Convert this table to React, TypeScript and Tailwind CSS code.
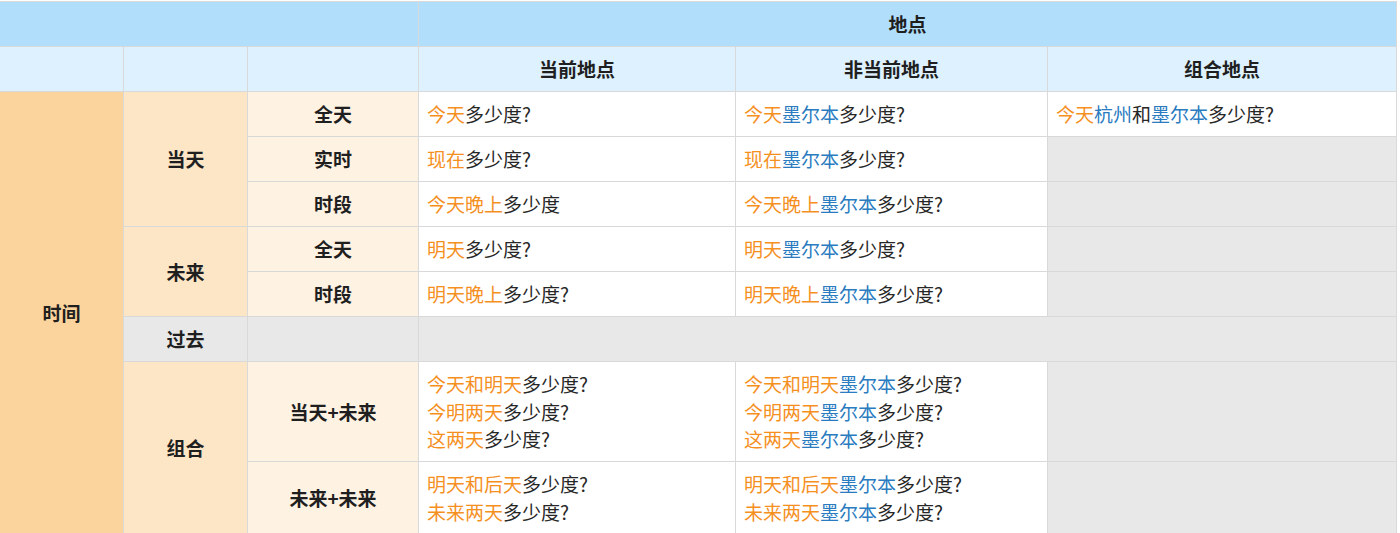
import React from "react";

const O = ({ children }: { children: React.ReactNode }) => (
  <span className="text-[#f5901f]">{children}</span>
);
const B = ({ children }: { children: React.ReactNode }) => (
  <span className="text-[#2a7bbf]">{children}</span>
);

const td = "border border-[#d9d9d9] px-[8px] py-[8.25px] leading-[27.5px] align-middle";
const lbl = `${td} text-center font-semibold text-[#1f1f1f]`;
const cell = `${td} bg-white text-[#262626] text-left`;
const gray = `${td} bg-[#e8e8e8]`;

export default function App() {
  return (
    <div className="w-[1400px] h-[533px] overflow-hidden bg-white pt-px">
      <table
        className="border-collapse table-fixed ml-[-1px] text-[19px]"
        style={{ fontFamily: '"Noto Sans CJK SC", "Noto Sans", sans-serif', width: 1398 }}
      >
        <colgroup>
          <col style={{ width: 124 }} />
          <col style={{ width: 124 }} />
          <col style={{ width: 171 }} />
          <col style={{ width: 317 }} />
          <col style={{ width: 312 }} />
          <col style={{ width: 349 }} />
        </colgroup>
        <tbody>
          <tr>
            <td colSpan={3} className={`${lbl} bg-[#b0defb]`}>&nbsp;</td>
            <td colSpan={3} className={`${lbl} bg-[#b0defb]`}>地点</td>
          </tr>
          <tr>
            <td className={`${lbl} bg-[#ddf1fe]`}>&nbsp;</td>
            <td className={`${lbl} bg-[#ddf1fe]`}>&nbsp;</td>
            <td className={`${lbl} bg-[#ddf1fe]`}>&nbsp;</td>
            <td className={`${lbl} bg-[#ddf1fe]`}>当前地点</td>
            <td className={`${lbl} bg-[#ddf1fe]`}>非当前地点</td>
            <td className={`${lbl} bg-[#ddf1fe]`}>组合地点</td>
          </tr>
          <tr>
            <td rowSpan={9} className={`${lbl} bg-[#fad49c]`}>时间</td>
            <td rowSpan={3} className={`${lbl} bg-[#fde6c6]`}>当天</td>
            <td className={`${lbl} bg-[#fef2e3]`}>全天</td>
            <td className={cell}><O>今天</O>多少度?</td>
            <td className={cell}><O>今天</O><B>墨尔本</B>多少度?</td>
            <td className={cell}><O>今天</O><B>杭州</B>和<B>墨尔本</B>多少度?</td>
          </tr>
          <tr>
            <td className={`${lbl} bg-[#fef2e3]`}>实时</td>
            <td className={cell}><O>现在</O>多少度?</td>
            <td className={cell}><O>现在</O><B>墨尔本</B>多少度?</td>
            <td className={gray}></td>
          </tr>
          <tr>
            <td className={`${lbl} bg-[#fef2e3]`}>时段</td>
            <td className={cell}><O>今天晚上</O>多少度</td>
            <td className={cell}><O>今天晚上</O><B>墨尔本</B>多少度?</td>
            <td className={gray}></td>
          </tr>
          <tr>
            <td rowSpan={2} className={`${lbl} bg-[#fde6c6]`}>未来</td>
            <td className={`${lbl} bg-[#fef2e3]`}>全天</td>
            <td className={cell}><O>明天</O>多少度?</td>
            <td className={cell}><O>明天</O><B>墨尔本</B>多少度?</td>
            <td className={gray}></td>
          </tr>
          <tr>
            <td className={`${lbl} bg-[#fef2e3]`}>时段</td>
            <td className={cell}><O>明天晚上</O>多少度?</td>
            <td className={cell}><O>明天晚上</O><B>墨尔本</B>多少度?</td>
            <td className={gray}></td>
          </tr>
          <tr>
            <td className={`${lbl} bg-[#e8e8e8]`}>过去</td>
            <td className={gray}></td>
            <td colSpan={3} className={gray}></td>
          </tr>
          <tr>
            <td rowSpan={2} className={`${lbl} bg-[#fde6c6]`}>组合</td>
            <td className={`${lbl} bg-[#fef2e3]`}>当天+未来</td>
            <td className={cell}>
              <div><O>今天和明天</O>多少度?</div>
              <div><O>今明两天</O>多少度?</div>
              <div><O>这两天</O>多少度?</div>
            </td>
            <td className={cell}>
              <div><O>今天和明天</O><B>墨尔本</B>多少度?</div>
              <div><O>今明两天</O><B>墨尔本</B>多少度?</div>
              <div><O>这两天</O><B>墨尔本</B>多少度?</div>
            </td>
            <td className={gray}></td>
          </tr>
          <tr>
            <td className={`${lbl} bg-[#fef2e3]`}>未来+未来</td>
            <td className={cell}>
              <div><O>明天和后天</O>多少度?</div>
              <div><O>未来两天</O>多少度?</div>
            </td>
            <td className={cell}>
              <div><O>明天和后天</O><B>墨尔本</B>多少度?</div>
              <div><O>未来两天</O><B>墨尔本</B>多少度?</div>
            </td>
            <td className={gray}></td>
          </tr>
        </tbody>
      </table>
    </div>
  );
}
